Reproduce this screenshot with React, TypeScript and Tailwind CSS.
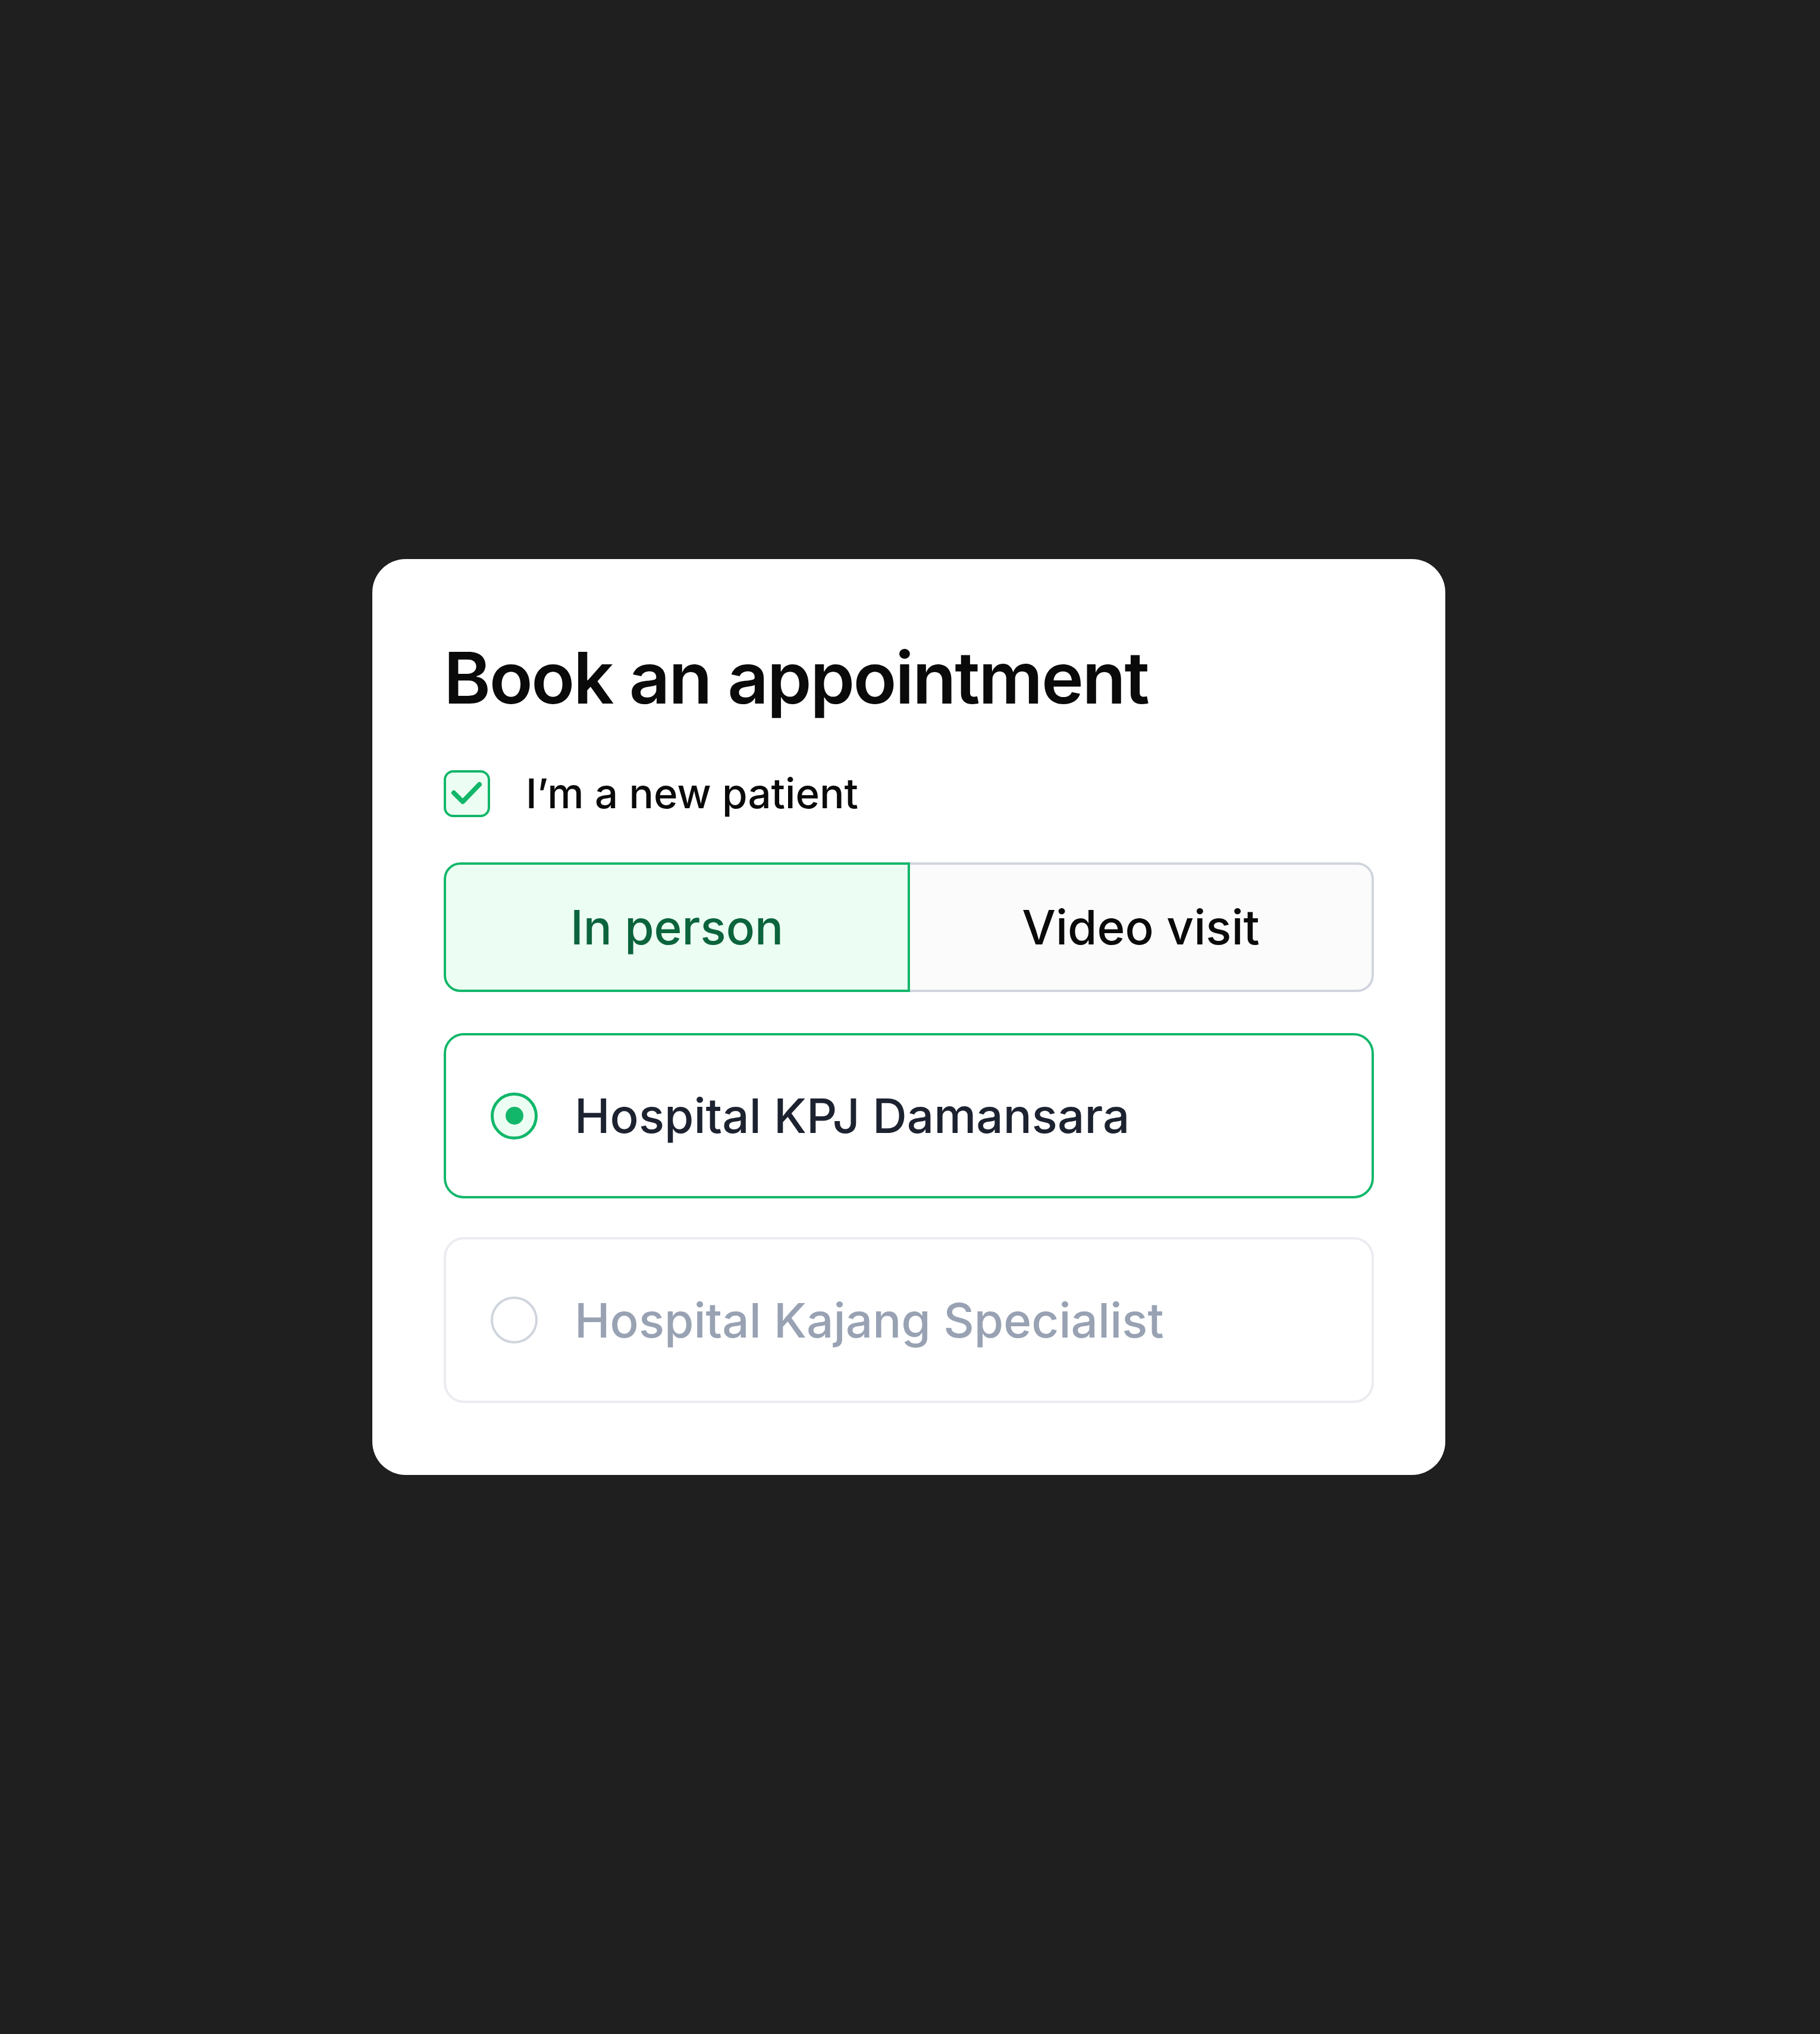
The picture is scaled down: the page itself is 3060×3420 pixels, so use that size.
import React from "react";

export default function App() {
  return (
    <div
      className="w-[3060px] h-[3420px] bg-[#1f1f1f] pt-[940px] pl-[626px]"
      style={{ fontFamily: "Inter, 'Noto Sans', sans-serif" }}
    >
      <div className="w-[1804px] bg-white rounded-[56px] px-[120px] pt-[128px] pb-[121px] flex flex-col">
        <h1 className="text-[120px] leading-[144px] font-semibold text-[#0a0a0a] tracking-[-0.02em]">
          Book an appointment
        </h1>

        <div className="mt-[83px] flex items-center gap-[60px] h-[79px]">
          <div className="w-[78px] h-[79px] rounded-[16px] border-[4px] border-[#12b76a] bg-[#ecfdf3] flex items-center justify-center">
            <svg width="78" height="79" viewBox="0 0 78 79" fill="none" className="-m-[4px]">
              <polyline
                points="17,38 32,53 60,24"
                stroke="#12b76a"
                strokeWidth="8"
                strokeLinecap="round"
                strokeLinejoin="round"
                fill="none"
              />
            </svg>
          </div>
          <span className="text-[69px] font-medium text-[#0a0a0a]">
            I’m a new patient
          </span>
        </div>

        <div className="mt-[76px] flex h-[218px]">
          <div className="flex-1 flex items-center justify-center rounded-l-[28px] border-[4px] border-[#12b76a] bg-[#ecfdf3]">
            <span className="text-[80px] font-medium text-[#0b643c]">In person</span>
          </div>
          <div className="flex-1 flex items-center justify-center rounded-r-[28px] border-[4px] border-l-0 border-[#d0d5dd] bg-[#fbfbfb]">
            <span className="text-[80px] font-medium text-[#0a0a0a]">Video visit</span>
          </div>
        </div>

        <div className="mt-[69px] h-[278px] rounded-[34px] border-[4px] border-[#12b76a] flex items-center pl-[75px] gap-[62px]">
          <div className="w-[79px] h-[79px] rounded-full border-[5px] border-[#12b76a] bg-[#ecfdf3] flex items-center justify-center shrink-0">
            <div className="w-[30px] h-[30px] rounded-full bg-[#12b76a]" />
          </div>
          <span className="text-[80px] font-medium text-[#1d2230]">Hospital KPJ Damansara</span>
        </div>

        <div className="mt-[65px] h-[279px] rounded-[34px] border-[4px] border-[#eaecf0] flex items-center pl-[75px] gap-[62px]">
          <div className="w-[79px] h-[79px] rounded-full border-[4px] border-[#d0d5dd] bg-white shrink-0" />
          <span className="text-[80px] font-medium text-[#98a2b3]">Hospital Kajang Specialist</span>
        </div>
      </div>
    </div>
  );
}
